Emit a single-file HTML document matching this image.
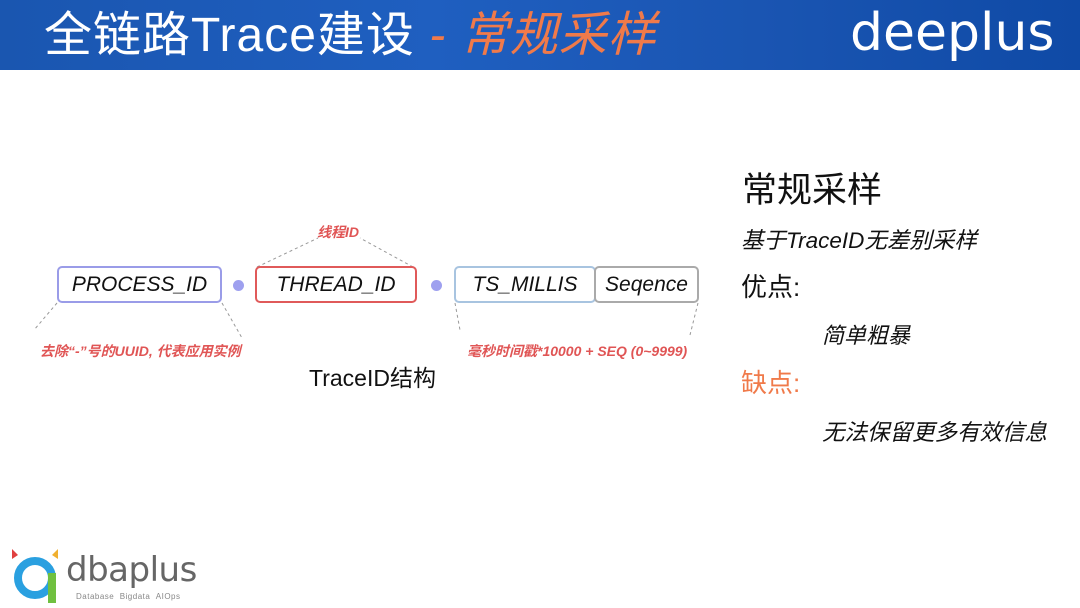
<!DOCTYPE html>
<html><head><meta charset="utf-8"><style>
*{margin:0;padding:0;box-sizing:border-box}
body{width:1080px;height:608px;background:#fff;position:relative;overflow:hidden;font-family:"Liberation Sans","Noto Sans CJK SC",sans-serif}
.hd{position:absolute;left:0;top:0;width:1080px;height:70px;background:linear-gradient(90deg,#1a56b0 0%,#1f5fc0 40%,#1a55b2 70%,#0f4aa6 100%)}
.t{position:absolute;top:8px;left:44px;font-size:48px;color:#fff;line-height:56px;white-space:nowrap;letter-spacing:1px}
.t i{color:#f07a4a}
.logo{position:absolute;left:850px;top:4px;font-size:52px;color:#fff;font-family:"DejaVu Sans",sans-serif;letter-spacing:0px;line-height:58px}
.a{position:absolute;white-space:nowrap}
.box{position:absolute;height:37px;border:2px solid;border-radius:5px;font-style:italic;font-size:21px;text-align:center;line-height:33px;color:#111}
.dot{position:absolute;width:11px;height:11px;border-radius:50%;background:#9ea0ef}
.red{color:#e05555;font-style:italic;font-weight:bold;font-size:14px}
</style></head><body>
<div class="hd"></div>
<div class="t">全链路Trace建设 <i>- 常规采样</i></div>
<div class="logo">deeplus</div>

<div class="a red" style="left:317px;top:222px">线程ID</div>
<svg class="a" style="left:0;top:0" width="1080" height="608">
<g stroke="#999" stroke-dasharray="3,3" fill="none">
<line x1="257" y1="267" x2="318" y2="238"/><line x1="413" y1="267" x2="360" y2="238"/>
<line x1="57" y1="303" x2="34" y2="330"/><line x1="222" y1="303" x2="242" y2="338"/>
<line x1="455" y1="303" x2="460" y2="330"/><line x1="698" y1="303" x2="690" y2="335"/>
</g></svg>
<div class="box" style="left:57px;top:266px;width:165px;border-color:#9a9ce8">PROCESS_ID</div>
<div class="dot" style="left:233px;top:280px"></div>
<div class="box" style="left:255px;top:266px;width:162px;border-color:#e05a5a">THREAD_ID</div>
<div class="dot" style="left:431px;top:280px"></div>
<div class="box" style="left:454px;top:266px;width:142px;border-color:#a8c4e0">TS_MILLIS</div>
<div class="box" style="left:594px;top:266px;width:105px;border-color:#aaa">Seqence</div>
<div class="a red" style="left:40px;top:341px">去除“-”号的UUID, 代表应用实例</div>
<div class="a red" style="left:467px;top:341px">毫秒时间戳*10000 + SEQ (0~9999)</div>
<div class="a" style="left:309px;top:359px;font-size:23px;color:#111">TraceID结构</div>

<div class="a" style="left:742px;top:170px;font-size:35px;color:#111;line-height:42px">常规采样</div>
<div class="a" style="left:741px;top:227px;font-size:22.5px;font-style:italic;color:#111;line-height:28px">基于TraceID无差别采样</div>
<div class="a" style="left:741px;top:271px;font-size:26px;color:#111;line-height:32px">优点:</div>
<div class="a" style="left:822px;top:322px;font-size:22px;font-style:italic;color:#111;line-height:28px">简单粗暴</div>
<div class="a" style="left:741px;top:367px;font-size:26px;color:#f07a4a;line-height:32px">缺点:</div>
<div class="a" style="left:822px;top:419px;font-size:22.5px;font-style:italic;color:#111;line-height:28px">无法保留更多有效信息</div>

<svg class="a" style="left:8px;top:545px" width="60" height="60">
<polygon points="4,4 10,10 4,14" fill="#e04040"/><polygon points="50,4 44,10 50,14" fill="#f0b030"/>
<circle cx="27" cy="33" r="17" fill="none" stroke="#2aa0e0" stroke-width="8"/>
<path d="M44 28 V58" stroke="#70c040" stroke-width="8"/>
</svg>
<div class="a" style="left:66px;top:552px;font-size:34px;color:#666;font-family:'DejaVu Sans',sans-serif;letter-spacing:-0.5px;line-height:36px">dbaplus</div>
<div class="a" style="left:76px;top:592px;font-size:8px;color:#888;letter-spacing:0.5px">Database &nbsp;Bigdata &nbsp;AIOps</div>
</body></html>
